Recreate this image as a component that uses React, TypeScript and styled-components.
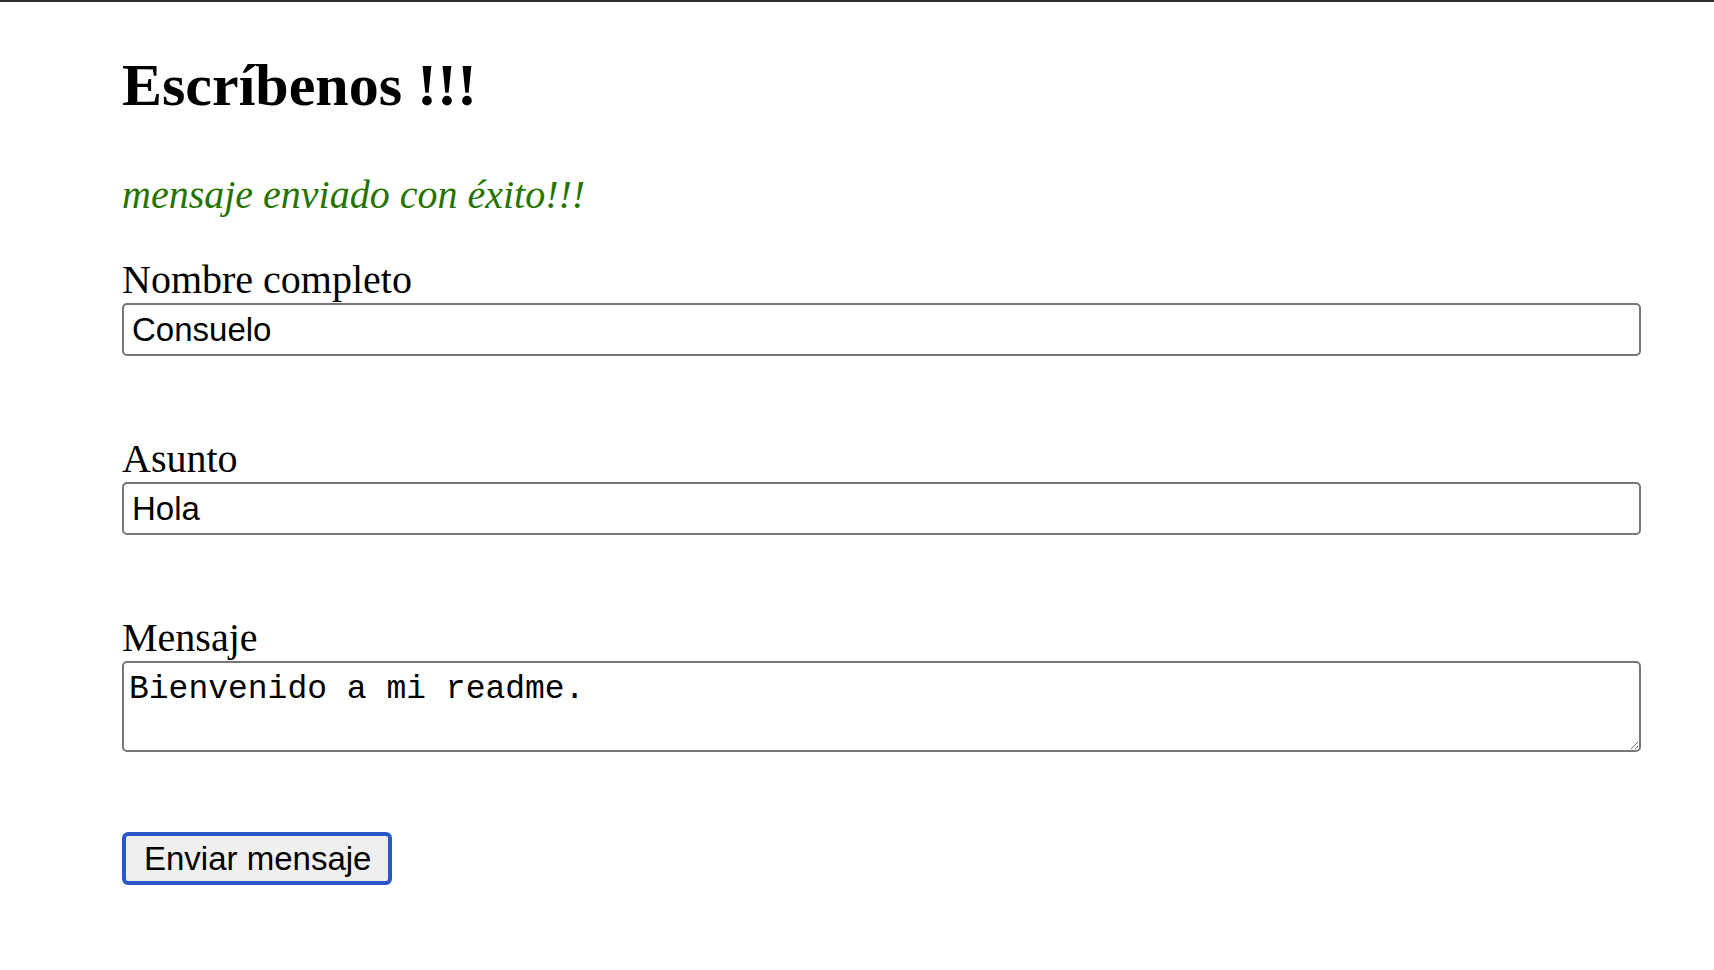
import React from "react";
import styled, { createGlobalStyle } from "styled-components";

const GlobalStyle = createGlobalStyle`
  html, body {
    margin: 0;
    padding: 0;
    background: #ffffff;
  }
  body {
    border-top: 2px solid #2e2e2e;
    font-family: "Liberation Serif", "Times New Roman", serif;
    color: #000000;
  }
  * {
    box-sizing: border-box;
  }
`;

const Page = styled.main`
  padding: 0 73px 60px 122px;
`;

const Title = styled.h2`
  margin: 50px 0 0;
  font-family: "Liberation Serif", "Times New Roman", serif;
  font-size: 60px;
  line-height: 66px;
  font-weight: 700;
`;

const Success = styled.p`
  margin: 55px 0 0;
  font-family: "Liberation Serif", "Times New Roman", serif;
  font-size: 40px;
  line-height: 44px;
  font-style: italic;
  color: #267400;
`;

const Form = styled.form`
  display: flex;
  flex-direction: column;
  margin-top: 41px;
`;

const Field = styled.div<{ $gapTop: number }>`
  display: flex;
  flex-direction: column;
  margin-top: ${(p) => p.$gapTop}px;
`;

const Label = styled.label`
  display: block;
  font-family: "Liberation Serif", "Times New Roman", serif;
  font-size: 40px;
  line-height: 44px;
  height: 44px;
  color: #000;
`;

const TextInput = styled.input`
  display: block;
  width: 100%;
  height: 53px;
  margin-top: 1px;
  padding: 0 8px;
  border: 2px solid #767676;
  border-radius: 5px;
  background: #fff;
  font-family: "Liberation Sans", Arial, sans-serif;
  font-size: 33px;
  color: #000;
  outline: none;
`;

const TextArea = styled.textarea`
  display: block;
  width: 100%;
  height: 91px;
  margin-top: 1px;
  padding: 8px 5px 3px;
  border: 2px solid #767676;
  border-radius: 5px;
  background: #fff;
  font-family: "Liberation Mono", "Courier New", monospace;
  font-size: 33px;
  line-height: 38px;
  color: #000;
  outline: none;
  resize: both;
`;

const SubmitRow = styled.div`
  margin-top: 80px;
`;

const SubmitButton = styled.button`
  display: inline-flex;
  align-items: center;
  height: 53px;
  width: 270px;
  padding: 0 0 0 18px;
  border: 4px solid #2a57c9;
  border-radius: 6px;
  background: #efefef;
  font-family: "Liberation Sans", Arial, sans-serif;
  font-size: 33px;
  color: #000;
  cursor: pointer;
`;

export default function App() {
  return (
    <>
      <GlobalStyle />
      <Page>
        <Title>Escríbenos !!!</Title>
        <Success>mensaje enviado con éxito!!!</Success>
        <Form onSubmit={(e) => e.preventDefault()}>
          <Field $gapTop={0}>
            <Label htmlFor="nombre">Nombre completo</Label>
            <TextInput id="nombre" type="text" defaultValue="Consuelo" />
          </Field>
          <Field $gapTop={81}>
            <Label htmlFor="asunto">Asunto</Label>
            <TextInput id="asunto" type="text" defaultValue="Hola" />
          </Field>
          <Field $gapTop={81}>
            <Label htmlFor="mensaje">Mensaje</Label>
            <TextArea id="mensaje" defaultValue="Bienvenido a mi readme." />
          </Field>
          <SubmitRow>
            <SubmitButton type="submit">Enviar mensaje</SubmitButton>
          </SubmitRow>
        </Form>
      </Page>
    </>
  );
}
